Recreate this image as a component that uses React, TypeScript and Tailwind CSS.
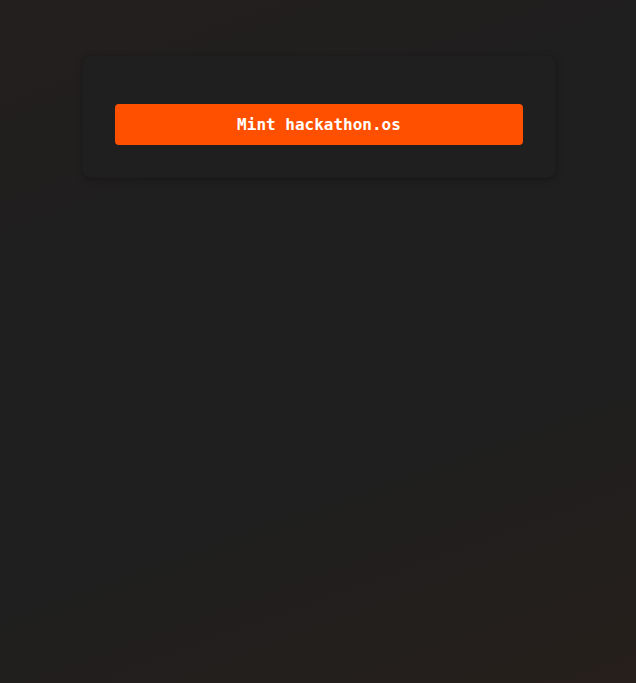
import React from "react";

export default function App() {
  return (
    <div className="min-h-[683px] w-full bg-[linear-gradient(160deg,#231f1e_0%,#1f1f1f_35%,#1f1f1f_65%,#261f1b_100%)] pl-[2px] pt-[55px]">
      <div className="mx-auto w-[474px] rounded-lg border border-[#1c1c1c] bg-[#1f1f1f] px-8 pb-8 pt-12 shadow-[0_2px_6px_rgba(0,0,0,0.25)]">
        <button className="flex h-[41px] w-full items-center justify-center rounded-[4px] bg-[#ff5000] text-[16px] font-bold text-white [font-family:'DejaVu_Sans_Mono',monospace]">
          Mint hackathon.os
        </button>
      </div>
    </div>
  );
}
